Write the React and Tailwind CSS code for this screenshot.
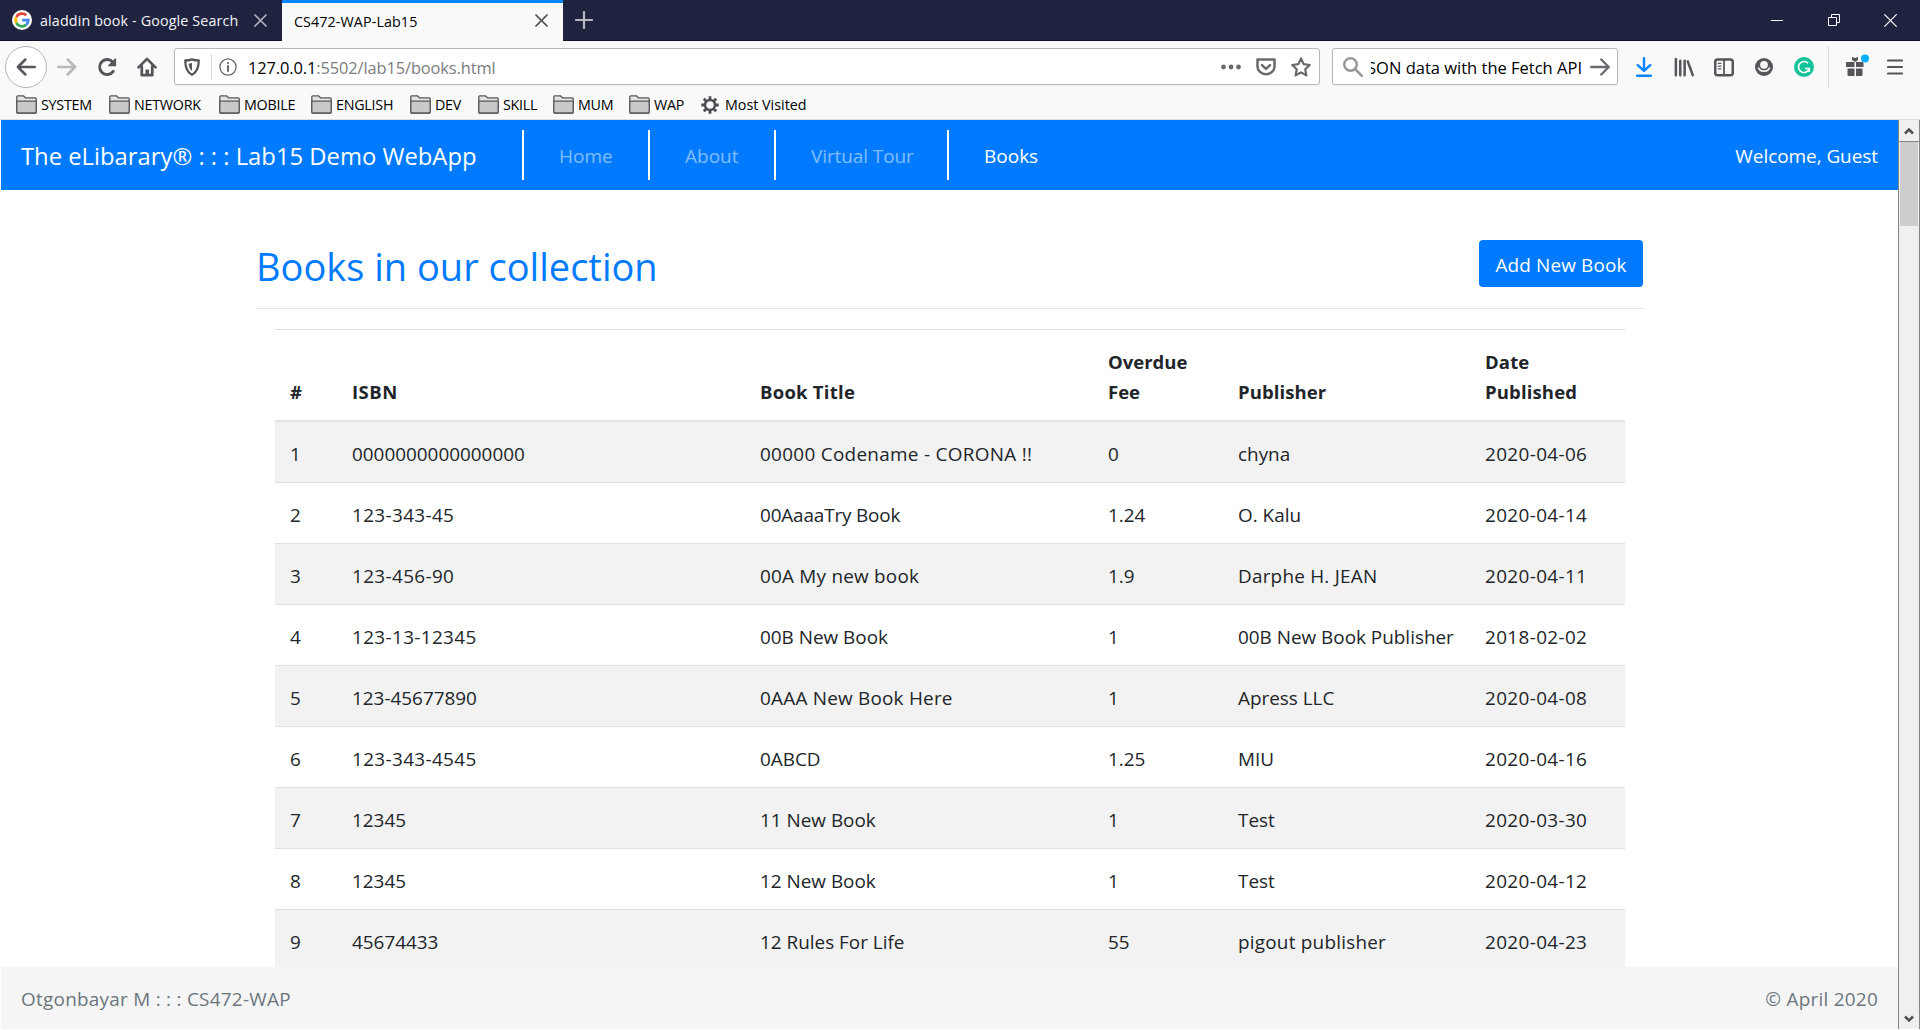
const books = [
  ['1', '0000000000000000', '00000 Codename - CORONA !!', '0', 'chyna', '2020-04-06'],
  ['2', '123-343-45', '00AaaaTry Book', '1.24', 'O. Kalu', '2020-04-14'],
  ['3', '123-456-90', '00A My new book', '1.9', 'Darphe H. JEAN', '2020-04-11'],
  ['4', '123-13-12345', '00B New Book', '1', '00B New Book Publisher', '2018-02-02'],
  ['5', '123-45677890', '0AAA New Book Here', '1', 'Apress LLC', '2020-04-08'],
  ['6', '123-343-4545', '0ABCD', '1.25', 'MIU', '2020-04-16'],
  ['7', '12345', '11 New Book', '1', 'Test', '2020-03-30'],
  ['8', '12345', '12 New Book', '1', 'Test', '2020-04-12'],
  ['9', '45674433', '12 Rules For Life', '55', 'pigout publisher', '2020-04-23'],
];

const bookmarks = [
  ['SYSTEM', 'w-[93px]'],
  ['NETWORK', 'w-[110px]'],
  ['MOBILE', 'w-[92px]'],
  ['ENGLISH', 'w-[99px]'],
  ['DEV', 'w-[68px]'],
  ['SKILL', 'w-[75px]'],
  ['MUM', 'w-[76px]'],
  ['WAP', 'w-[72px]'],
];

const Icon = ({ className = '', size = 20, vb = 16, children, ...rest }) => (
  <svg width={size} height={size} viewBox={`0 0 ${vb} ${vb}`} fill="none" stroke="currentColor" strokeWidth="2" strokeLinecap="round" strokeLinejoin="round" className={`shrink-0 ${className}`} {...rest}>
    {children}
  </svg>
);

const Google = () => (
  <svg width="20" height="20" viewBox="0 0 20 20" className="shrink-0">
    <circle cx="10" cy="10" r="10" fill="#fff" />
    <g fill="none" strokeWidth="2.7">
      <path d="M14.300 5.200A6.400 6.400 0 0 0 4.400 7" stroke="#ea4335" />
      <path d="M4.400 7a6.400 6.400 0 0 0 0 6" stroke="#fbbc05" />
      <path d="M4.400 13a6.400 6.400 0 0 0 9.700 1.900" stroke="#34a853" />
      <path d="M14.100 14.900A6.400 6.400 0 0 0 16.300 10.200H10.200" stroke="#4285f4" />
    </g>
  </svg>
);

const Close = ({ className }) => (
  <svg width="13" height="13" viewBox="0 0 13 13" className={className} stroke="currentColor" strokeWidth="1.7" strokeLinecap="round">
    <path d="M1 1l11 11M12 1L1 12" />
  </svg>
);

const Folder = () => (
  <svg width="21" height="19" viewBox="0 0 21 19" className="shrink-0" stroke="#58585a" strokeWidth="1.3" strokeLinejoin="round">
    <path d="M.8 17V1.8q0-1 1-1h5.600l2 2h9.800q1 0 1 1V17q0 1-1 1H1.800q-1 0-1-1z" fill="#e2e2e4" />
    <path d="M.8 6.200h19.400V17q0 1-1 1H1.800q-1 0-1-1z" fill="#c9c9cb" />
  </svg>
);

function TabBar() {
  return (
    <div className="flex h-[41px] border-b border-[#0f0f28] bg-[#202340] text-[14px]">
      <div className="flex w-[282px] items-center pl-3 text-[#f4f4f8]">
        <Google />
        <span className="ml-2 w-[214px] pt-0.5 text-[14.300px] tracking-[0.14px] whitespace-nowrap">aladdin book - Google Search</span>
        <Close className="text-[#b4b4c0]" />
      </div>
      <div className="flex h-[41px] w-[281px] items-center border-t-3 border-[#0a84ff] bg-[#f9f9fa] pr-[15px] pb-[3px] pl-3 text-black">
        <span className="flex-1 pt-0.5 text-[14.300px] tracking-[0.1px]">CS472-WAP-Lab15</span>
        <Close className="text-[#4a4a4f]" />
      </div>
      <div className="flex flex-1 items-center pl-3 text-[#b8b8c4]">
        <svg width="18" height="18" viewBox="0 0 18 18" stroke="currentColor" strokeWidth="2.200" strokeLinecap="round"><path d="M9 1v16M1 9h16" /></svg>
      </div>
      <div className="flex items-center text-white">
        <svg width="12" height="13" viewBox="0 0 12 13" className="mr-[45px]" stroke="currentColor"><path d="M0 6.500h12" /></svg>
        <svg width="12" height="12" viewBox="0 0 12 12" className="mr-11" fill="none" stroke="currentColor"><path d="M.5 3.500h8v8h-8zM3.500 3.500v-3h8v8h-3" /></svg>
        <svg width="13" height="13" viewBox="0 0 13 13" className="mr-[23px]" stroke="currentColor" strokeWidth="1.200"><path d="M.3.3l12.400 12.400M12.700.3L.3 12.700" /></svg>
      </div>
    </div>
  );
}

function Toolbar() {
  return (
    <div className="flex h-[51px] items-center bg-[#f9f9fa] text-[#55555a]">
      <div className="ml-[5px] flex size-[42px] items-center justify-center rounded-full border border-[#b5b5b8] bg-white">
        <Icon><path d="M15 8H1.500M7.500 2L1.500 8l6 6" /></Icon>
      </div>
      <Icon className="ml-2.5 text-[#b9b9bb]"><path d="M1 8h13.500M8.500 2l6 6-6 6" /></Icon>
      <Icon className="ml-5"><path d="M13 11.500A6 6 0 1 1 13 4.500" strokeWidth="2.300" /><path d="M14.800 1.500v5.300H9.500z" fill="currentColor" strokeWidth="1" /></Icon>
      <Icon className="ml-5"><path d="M1.200 8.300L8 1.500l6.800 6.800" strokeWidth="2.200" /><path d="M3.800 7.500V14.500h8.400V7.500" strokeWidth="2.200" /><path d="M6.800 15v-5h2.800v5z" fill="currentColor" stroke="none" /></Icon>
      <div className="ml-[17px] flex h-[37px] w-[1146px] items-center rounded-[3px] border border-[#b9b9bb] bg-white shadow-xs">
        <Icon size={18} className="ml-2"><path d="M8 1.200c2 .8 4 1 6 1C14 8 12.500 12.500 8 15 3.500 12.500 2 8 2 2.200c2 0 4-.2 6-1z" /><path d="M8 4.500v7C6 10 5.200 7.500 5 5z" fill="currentColor" stroke="none" /></Icon>
        <div className="ml-2.5 h-[26px] w-px bg-[#d7d7db]" />
        <Icon size={18} className="ml-[7px] text-[#6b6b6f]" strokeWidth="1.200"><circle cx="8" cy="8" r="7.200" /><path d="M8 7.200v4.300M8 4.400v.3" strokeWidth="1.800" /></Icon>
        <span className="ml-[11px] flex-1 pt-[3px] text-[16.400px] tracking-[-0.1px] text-[#7c7c80]"><span className="text-black">127.0.0.1</span>:5502/lab15/books.html</span>
        <svg width="20" height="6" viewBox="0 0 20 6" fill="#6a6a6e" className="mr-[15px]"><circle cx="2.500" cy="3" r="2.400" /><circle cx="10" cy="3" r="2.400" /><circle cx="17.500" cy="3" r="2.400" /></svg>
        <Icon className="mr-[15px] text-[#6a6a6e]"><path d="M1.200 2h13.600v5.500a6.800 6.300 0 0 1-13.600 0z" /><path d="M4.800 6.500L8 9.500l3.200-3" /></Icon>
        <Icon className="mr-[8px] text-[#6a6a6e]"><path d="M8 1.200l2.100 4.500 4.900.7-3.600 3.400.9 4.900L8 12.300l-4.300 2.400.9-4.900L1 6.400l4.900-.7z" strokeWidth="1.800" /></Icon>
      </div>
      <div className="ml-3 flex h-[37px] w-[286px] items-center rounded-[3px] border border-[#b9b9bb] bg-white shadow-xs">
        <Icon className="ml-2.5 text-[#98989b]"><circle cx="6" cy="6" r="5" /><path d="M9.800 9.800L15 15" /></Icon>
        <div className="ml-2 flex w-[211px] justify-end overflow-hidden pt-[3px] text-[16.500px] whitespace-nowrap text-black">JSON data with the Fetch API</div>
        <Icon className="ml-2 text-[#6a6a6e]"><path d="M1 8h13.500M9 2L15 8l-6 6" strokeWidth="1.900" /></Icon>
      </div>
      <Icon className="ml-4 text-[#0a84ff]"><path d="M8 1v9.500M3 6.500L8 11l5-4.500M2.500 15h11" strokeWidth="1.900" /></Icon>
      <Icon className="ml-5"><path d="M1.500 1.500v13M5 3v11.500M8.500 3v11.500M11 3.500l4 11" /></Icon>
      <Icon className="ml-5"><rect x="1" y="2" width="14" height="12.500" rx="1.800" /><path d="M8 2v12.500" strokeWidth="1.400" /><path d="M3.500 5h2M3.500 7.200h2M3.500 9.400h2" strokeWidth="1" /></Icon>
      <svg width="18" height="18" viewBox="0 0 18 18" className="ml-[21px] shrink-0"><circle cx="9" cy="9" r="9" fill="#55555a" /><circle cx="9" cy="6.800" r="3.900" fill="#f9f9fa" /><path d="M3.300 9.500a5.900 4.900 0 0 0 11.400 0" fill="none" stroke="#f9f9fa" strokeWidth="1.600" /></svg>
      <svg width="20" height="20" viewBox="0 0 20 20" className="ml-[21px] shrink-0"><circle cx="10" cy="10" r="10" fill="#15c39a" /><path d="M14 6.200A5.500 5.500 0 1 0 15.300 11.500M11 11.500h4.300v3.500" fill="none" stroke="#fff" strokeWidth="1.700" /></svg>
      <div className="ml-3.5 h-[42px] w-px bg-[#d7d7db]" />
      <svg width="23" height="22" viewBox="0 0 23 22" className="mt-[-3px] ml-[17px] shrink-0" fill="#55555a"><path d="M1 8h7.500v5H0V9q0-1 1-1zM10 8h6.500q1 0 1 1v4H10zM1.500 14.500h7V22h-6q-1 0-1-1zM10 14.500h6.500V21q0 1-1 1H10zM6 3l3 1 3-1v3L9.500 8 6 6z" /><circle cx="19" cy="4.500" r="4" fill="#00b0ff" /></svg>
      <svg width="16" height="16" viewBox="0 0 16 16" className="ml-[18px]" stroke="currentColor" strokeWidth="2.200" strokeLinecap="round"><path d="M1 1.500h14M1 8h14M1 14.500h14" /></svg>
    </div>
  );
}

function Bookmarks() {
  return (
    <div className="flex h-7 items-center border-b border-[#dddde0] bg-[#f9f9fa] pb-0.5 pl-4 text-[14.300px] text-black">
      {bookmarks.map(([name, w]) => (
        <div key={name} className={`flex shrink-0 items-center ${w}`}>
          <Folder />
          <span className="ml-1 pt-px tracking-[-0.25px]">{name}</span>
        </div>
      ))}
      <svg width="18" height="18" viewBox="0 0 18 18" className="shrink-0" fill="none" stroke="#4f4f53">
        <circle cx="9" cy="9" r="5" strokeWidth="2.500" />
        <path d="M9 .3v3.500M9 14.200v3.500M.3 9h3.500M14.200 9h3.500M2.800 2.800l2.500 2.500M12.700 12.700l2.500 2.500M15.200 2.800l-2.500 2.500M5.300 12.700l-2.500 2.500" strokeWidth="2.800" />
      </svg>
      <span className="ml-1.5 pt-px">Most Visited</span>
    </div>
  );
}

function Navbar() {
  const link = 'flex h-[50px] items-center border-l-2 border-white pt-[3px] pl-[35px]';
  return (
    <nav className="flex h-[70px] items-center bg-[#007bff] pl-5 text-[19px] text-white/50">
      <span className="w-[501px] pt-[3px] text-[23.800px] whitespace-nowrap text-white">The eLibarary® : : : Lab15 Demo WebApp</span>
      <span className={`${link} w-[126px]`}>Home</span>
      <span className={`${link} w-[126px]`}>About</span>
      <span className={`${link} w-[173px] tracking-[-0.1px]`}>Virtual Tour</span>
      <span className={`${link} flex-1 text-white`}>Books</span>
      <span className="pt-[3px] pr-5 tracking-[-0.07px] text-white">Welcome, Guest</span>
    </nav>
  );
}

const cols = 'grid grid-cols-[62px_408px_348px_130px_247px_156px] *:pl-[15px] whitespace-nowrap';

function tracking(cell) {
  if (/^\d+-\d+-\d+$/.test(cell)) return 'tracking-[0.37px]';
  if (/CORONA/.test(cell)) return 'tracking-[0.3px]';
  if (/Try Book/.test(cell)) return 'tracking-[-0.15px]';
  if (/my new|New Book Here|JEAN|pigout/i.test(cell)) return 'tracking-[0.23px]';
  return '';
}

function BookTable() {
  return (
    <div className="mt-5 mr-[18px] ml-[19px]">
      <div className={`${cols} h-[93px] items-end border-t border-b-2 border-[#dee2e6] pb-[13px] text-[18.500px] leading-[30px] font-bold`}>
        <span>#</span>
        <span className="tracking-[0.5px]">ISBN</span>
        <span className="tracking-[0.25px]">Book Title</span>
        <span>Overdue<br />Fee</span>
        <span className="tracking-[0.1px]">Publisher</span>
        <span className="tracking-[0.15px]">Date<br />Published</span>
      </div>
      {books.map((row) => (
        <div key={row[0]} className={`${cols} h-[61px] items-center border-t border-[#dee2e6] pt-1 odd:bg-white even:bg-[#f2f2f2] nth-2:h-[60px] nth-2:border-t-0`}>
          {row.map((cell, i) => <span key={i} className={tracking(cell)}>{cell}</span>)}
        </div>
      ))}
    </div>
  );
}

function Scrollbar() {
  return (
    <div className="flex w-[22px] flex-col border-x border-[#858585] bg-[#f0f0f0]">
      <div className="flex h-[22px] items-center justify-center border-b border-[#858585]">
        <svg width="10" height="8" viewBox="0 0 10 8" fill="none" stroke="#505050" strokeWidth="2.500"><path d="M1 6.500l4-4 4 4" /></svg>
      </div>
      <div className="mx-px h-[84px] bg-[#cdcdcd]" />
      <div className="flex-1" />
      <div className="flex h-[21px] items-center justify-center">
        <svg width="10" height="8" viewBox="0 0 10 8" fill="none" stroke="#505050" strokeWidth="2.500"><path d="M1 1.500l4 4 4-4" /></svg>
      </div>
    </div>
  );
}

export default function App() {
  return (
    <div className="flex h-[1030px] w-[1920px] flex-col overflow-hidden bg-white pb-px font-['Open_Sans',sans-serif] text-[#212529]">
      <TabBar />
      <Toolbar />
      <Bookmarks />
      <div className="flex min-h-0 flex-1 pl-px">
        <div className="flex min-w-0 flex-1 flex-col">
          <Navbar />
          <main className="min-h-0 flex-1 overflow-hidden pl-[255px] text-[18.900px]">
            <div className="w-[1387px]">
              <div className="flex h-[119px] items-start justify-between border-b border-[#e5e5e5] pt-[50px]">
                <h1 className="text-[38px] leading-[52px] text-[#007bff]">Books in our collection</h1>
                <button className="h-[47px] w-[164px] rounded-[4px] bg-[#007bff] pt-1 tracking-[0.15px] whitespace-nowrap text-white">Add New Book</button>
              </div>
              <BookTable />
            </div>
          </main>
          <footer className="flex h-[62px] items-center justify-between bg-[#f5f5f5] px-5 pt-[3px] text-[18.900px] text-[#6c757d]">
            <span className="tracking-[0.27px]">Otgonbayar M : : : CS472-WAP</span>
            <span className="tracking-[0.27px]">© April 2020</span>
          </footer>
        </div>
        <Scrollbar />
      </div>
    </div>
  );
}
